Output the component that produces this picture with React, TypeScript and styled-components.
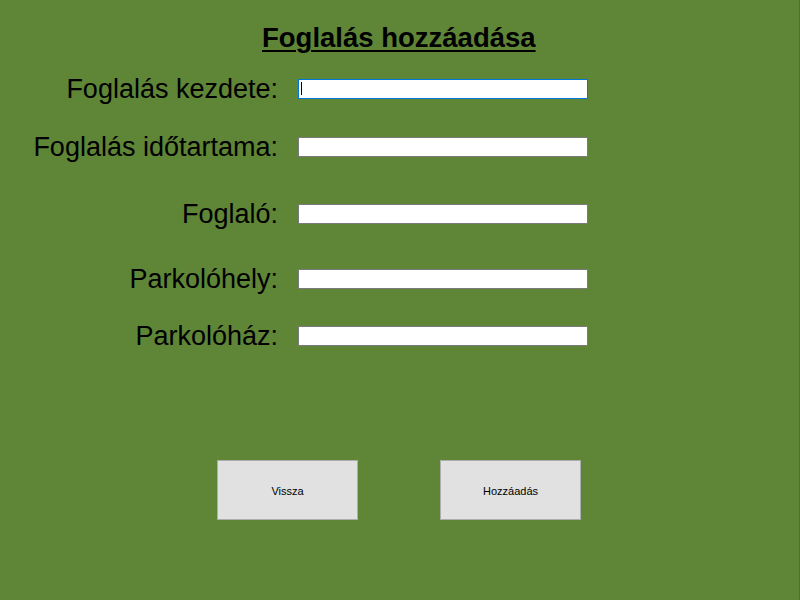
import React from 'react';
import styled, { createGlobalStyle } from 'styled-components';

const fields = [
  { label: 'Foglalás kezdete:', gap: 0, focused: true },
  { label: 'Foglalás időtartama:', gap: 38, focused: false },
  { label: 'Foglaló:', gap: 47, focused: false },
  { label: 'Parkolóhely:', gap: 45, focused: false },
  { label: 'Parkolóház:', gap: 37, focused: false },
];

//
// MAIN COMPONENT
//
const App = () => {
  return (
    <>
      <GlobalStyle />
      <Window>
        <Title>Foglalás hozzáadása</Title>
        <Form>
          {fields.map((f) => (
            <Row key={f.label} $gap={f.gap}>
              <Label>{f.label}</Label>
              <InputBox $focused={f.focused}>
                {f.focused && <Caret />}
              </InputBox>
            </Row>
          ))}
        </Form>
        <Buttons>
          <Button>Vissza</Button>
          <Button>Hozzáadás</Button>
        </Buttons>
      </Window>
    </>
  );
};

export default App;

//
// STYLED COMPONENT
//
const GlobalStyle = createGlobalStyle`
  html, body {
    margin: 0;
    padding: 0;
    background: #5f8537;
  }
`;

const Window = styled.div`
  width: 800px;
  height: 600px;
  box-sizing: border-box;
  background: #5f8537;
  border-right: 1px solid #4f702c;
  font-family: "Liberation Sans", Arial, sans-serif;
  color: #000;
  display: flex;
  flex-direction: column;
`;

const Title = styled.h1`
  margin: 22px 0 0 262px;
  font-size: 27.5px;
  line-height: 32px;
  font-weight: bold;
  text-decoration: underline;
  text-decoration-thickness: 2px;
  text-underline-offset: 3px;
`;

const Form = styled.div`
  display: flex;
  flex-direction: column;
  margin-top: 25px;
`;

const Row = styled.div<{ $gap: number }>`
  display: grid;
  grid-template-columns: 278px 290px;
  column-gap: 20px;
  align-items: center;
  height: 20px;
  margin-top: ${(p) => p.$gap}px;
`;

const Label = styled.div`
  text-align: right;
  font-size: 27px;
  line-height: 20px;
  white-space: nowrap;
`;

const InputBox = styled.div<{ $focused: boolean }>`
  position: relative;
  box-sizing: border-box;
  height: 20px;
  width: 290px;
  background: #fff;
  border: 1px solid ${(p) => (p.$focused ? '#0078d7' : '#7a7a7a')};
`;

const Caret = styled.span`
  position: absolute;
  left: 2px;
  top: 2px;
  width: 1px;
  height: 13px;
  background: #000;
`;

const Buttons = styled.div`
  display: flex;
  gap: 82px;
  margin: 114px 0 0 217px;
`;

const Button = styled.div`
  box-sizing: border-box;
  width: 141px;
  height: 60px;
  background: #e1e1e1;
  border: 1px solid #adadad;
  display: flex;
  align-items: center;
  justify-content: center;
  font-size: 11px;
  padding-top: 1px;
`;
